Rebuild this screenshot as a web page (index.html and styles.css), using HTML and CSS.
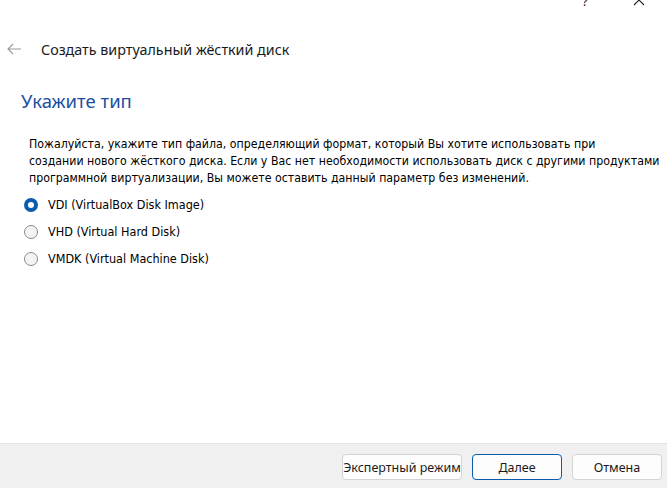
FILE: index.html
```html
<!DOCTYPE html>
<html lang="ru">
<head>
<meta charset="utf-8">
<link rel="stylesheet" href="styles.css">
</head>
<body>
<div class="window">
  <div class="caption">
    <span class="cap-help">?</span>
    <svg class="cap-close" width="12" height="12" viewBox="0 0 12 12"><path d="M1 1 L11 11 M11 1 L1 11" stroke="#222" stroke-width="1.1" fill="none"/></svg>
  </div>
  <div class="header">
    <svg class="back" width="16" height="12" viewBox="0 0 16 12"><path d="M15 6 H2 M7 1 L2 6 L7 11" stroke="#9a9a9a" stroke-width="1.1" fill="none"/></svg>
    <span class="wiz-title">Создать виртуальный жёсткий диск</span>
  </div>
  <div class="content">
    <h1 class="page-title">Укажите тип</h1>
    <p class="desc">Пожалуйста, укажите тип файла, определяющий формат, который Вы хотите использовать при<br>создании нового жёсткого диска. Если у Вас нет необходимости использовать диск с другими продуктами<br>программной виртуализации, Вы можете оставить данный параметр без изменений.</p>
    <div class="options">
      <label class="opt"><span class="radio checked"></span><span>VDI (VirtualBox Disk Image)</span></label>
      <label class="opt"><span class="radio"></span><span>VHD (Virtual Hard Disk)</span></label>
      <label class="opt"><span class="radio"></span><span>VMDK (Virtual Machine Disk)</span></label>
    </div>
  </div>
  <div class="footer">
    <button class="btn btn-expert">Экспертный режим</button>
    <button class="btn btn-default">Далее</button>
    <button class="btn">Отмена</button>
  </div>
</div>
</body>
</html>
```
FILE: styles.css
```css
html, body {
  margin: 0;
  padding: 0;
  background: #fff;
}
.window {
  width: 667px;
  height: 488px;
  display: flex;
  flex-direction: column;
  overflow: hidden;
  font-family: "DejaVu Sans Condensed", "DejaVu Sans", sans-serif;
  color: #000;
}
.caption {
  height: 10px;
  display: flex;
  justify-content: flex-end;
  align-items: flex-start;
  overflow: hidden;
}
.cap-help {
  font-family: "Noto Sans", sans-serif;
  font-size: 13px;
  line-height: 13px;
  margin-top: -5px;
  color: #222;
  margin-right: 45px;
}
.cap-close {
  margin-top: -6px;
  margin-right: 22px;
}
.header {
  margin-top: 31px;
  height: 16px;
  display: flex;
  align-items: center;
}
.back {
  margin-left: 6px;
  margin-right: 19px;
}
.wiz-title {
  font-family: "Noto Sans", sans-serif;
  font-size: 14.3px;
  color: #1a1a1a;
}
.content {
  padding-left: 21px;
}
.page-title {
  margin: 32px 0 0 0;
  font-family: "Noto Sans", sans-serif;
  font-weight: normal;
  font-size: 18.5px;
  line-height: 24px;
  color: #1c4ea4;
}
.desc {
  margin: 23px 0 0 8px;
  white-space: nowrap;
  font-size: 12.25px;
  line-height: 17px;
}
.options {
  margin-top: 4px;
  margin-left: 3px;
  display: flex;
  flex-direction: column;
}
.opt {
  height: 27px;
  display: flex;
  align-items: center;
  font-size: 12.5px;
}
.radio {
  box-sizing: border-box;
  width: 14px;
  height: 14px;
  border-radius: 50%;
  border: 1px solid #8a8a8a;
  background: #f4f4f4;
  margin-right: 10px;
}
.radio.checked {
  border: 4px solid #0b5cad;
  background: #fff;
}
.footer {
  margin-top: auto;
  height: 45px;
  box-sizing: border-box;
  border-top: 1px solid #e3e3e3;
  background: #f0f0f0;
  display: flex;
  justify-content: flex-end;
  align-items: flex-start;
  padding: 10px 5px 0 0;
  gap: 10px;
}
.btn {
  height: 26px;
  width: 90px;
  box-sizing: border-box;
  border: 1px solid #d3d3d3;
  border-radius: 4px;
  background: #fdfdfd;
  font-family: "Noto Sans", sans-serif;
  font-size: 12.5px;
  color: #1a1a1a;
  padding: 0;
}
.btn-expert {
  width: 120px;
}
.btn-default {
  border-color: #0b5cad;
}
```
